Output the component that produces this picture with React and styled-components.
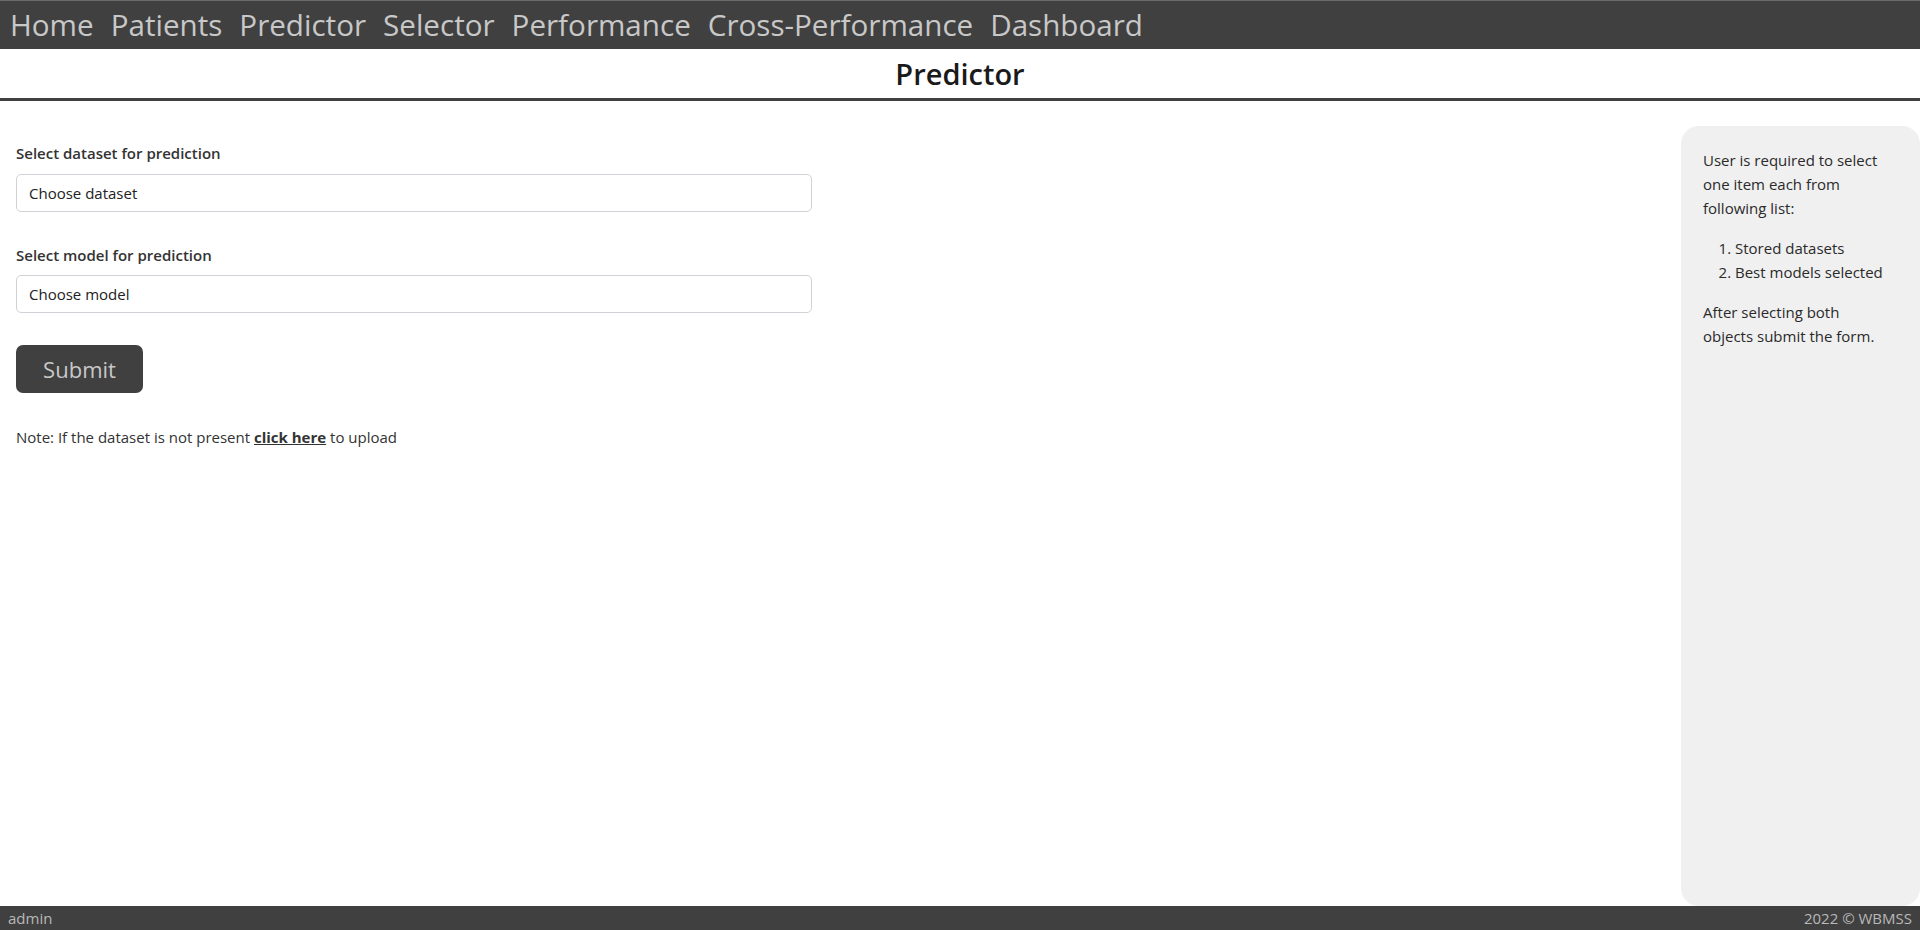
import React from 'react'
import styled, { createGlobalStyle } from 'styled-components'

const GlobalStyle = createGlobalStyle`
  * { box-sizing: border-box; }
  html, body { margin: 0; padding: 0; }
  body {
    font-family: "Open Sans", "Noto Sans", sans-serif;
    color: #212529;
    background: #fff;
  }
`

const links = ['Home', 'Patients', 'Predictor', 'Selector', 'Performance', 'Cross-Performance', 'Dashboard']

function App() {
  return (
    <>
      <GlobalStyle />
      <Page>
        <NavBar>
          {links.map(l => (
            <NavLink key={l} href="#">{l}</NavLink>
          ))}
        </NavBar>
        <TitleBar>
          <h1>Predictor</h1>
        </TitleBar>
        <Main>
          <Form onSubmit={e => e.preventDefault()}>
            <Field>
              <Label>Select dataset for prediction</Label>
              <Select defaultValue="">
                <option value="">Choose dataset</option>
              </Select>
            </Field>
            <Field>
              <Label>Select model for prediction</Label>
              <Select defaultValue="">
                <option value="">Choose model</option>
              </Select>
            </Field>
            <SubmitButton type="submit">Submit</SubmitButton>
            <Note>
              Note: If the dataset is not present <a href="#">click here</a> to upload
            </Note>
          </Form>
          <Aside>
            <p>User is required to select one item each from following list:</p>
            <ol>
              <li>Stored datasets</li>
              <li>Best models selected</li>
            </ol>
            <p>After selecting both objects submit the form.</p>
          </Aside>
        </Main>
        <Footer>
          <span>admin</span>
          <span>2022 © WBMSS</span>
        </Footer>
      </Page>
    </>
  )
}

export default App

const Page = styled.div`
  height: 100vh;
  display: grid;
  grid-template-rows: auto auto 1fr auto;
`

const NavBar = styled.nav`
  display: flex;
  align-items: center;
  gap: 17px;
  height: 49px;
  padding: 0 10px;
  background-color: #404040;
  border-top: 1px solid #6a6a6a;
`

const NavLink = styled.a`
  color: #c8c8c8;
  text-decoration: none;
  font-size: 29.6px;
  line-height: 1;
`

const TitleBar = styled.div`
  height: 52px;
  border-bottom: 3px solid #404040;
  display: flex;
  align-items: center;
  justify-content: center;

  > h1 {
    margin: 0;
    font-size: 29px;
    font-weight: 600;
    color: #1a1a1a;
  }
`

const Main = styled.main`
  display: grid;
  grid-template-columns: 1fr 239px;
  min-height: 0;
`

const Form = styled.form`
  display: flex;
  flex-direction: column;
  align-items: flex-start;
  padding: 42px 0 0 16px;
  width: 812px;
`

const Field = styled.div`
  width: 100%;

  & + & {
    margin-top: 33px;
  }
`

const Label = styled.label`
  display: block;
  font-size: 15px;
  font-weight: 600;
  color: #333;
  margin-bottom: 10.5px;
`

const Select = styled.select`
  display: block;
  width: 100%;
  height: 38px;
  padding: 0 12px;
  font-family: inherit;
  font-size: 15px;
  color: #222;
  background: #fff;
  border: 1px solid #cfd2d6;
  border-radius: 5px;
  appearance: none;
`

const SubmitButton = styled.button`
  width: 127px;
  height: 48px;
  margin-top: 32px;
  background-color: #404040;
  color: #c8c8c8;
  border: none;
  border-radius: 7px;
  font-family: inherit;
  font-size: 22px;
`

const Note = styled.p`
  margin: 34px 0 0;
  font-size: 15px;
  color: #333;

  > a {
    color: #333;
    font-weight: 700;
    text-decoration: underline;
  }
`

const Aside = styled.aside`
  margin-top: 25px;
  background-color: #f0f0f0;
  border-radius: 18px;
  padding: 22px 32px 22px 22px;
  font-size: 15px;
  line-height: 24px;
  color: #2a2a2a;

  > p { margin: 0 0 16px; }

  > ol {
    margin: 0 0 16px;
    padding-left: 32px;
  }
`

const Footer = styled.footer`
  height: 24px;
  display: flex;
  align-items: center;
  justify-content: space-between;
  padding: 0 8px;
  background-color: #404040;
  color: #b8b8b8;
  font-size: 15px;
`
